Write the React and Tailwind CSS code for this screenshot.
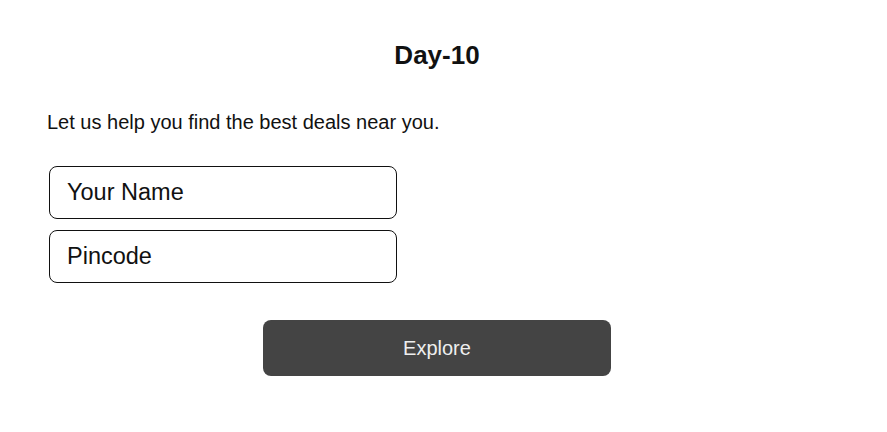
export default function App() {
  const ff = { fontFamily: '"Liberation Sans", Arial, sans-serif' };
  return (
    <div className="w-[887px] h-[432px] bg-white text-[#111]" style={ff}>
      <div className="w-[874px]">
        <h1 className="pt-[41px] text-center text-[26px] leading-[28px] font-bold">Day-10</h1>
        <p className="mt-[41px] ml-[47px] text-[20px] leading-[24px]">Let us help you find the best deals near you.</p>
        <div className="mt-[32px] ml-[49px] flex flex-col gap-[11px]">
          <input
            className="w-[348px] h-[53px] border-[1.5px] border-[#111] rounded-[8px] pl-[17px] text-[23.5px] placeholder:text-[#111] outline-none"
            placeholder="Your Name"
            style={ff}
          />
          <input
            className="w-[348px] h-[53px] border-[1.5px] border-[#111] rounded-[8px] pl-[17px] text-[23.5px] placeholder:text-[#111] outline-none"
            placeholder="Pincode"
            style={ff}
          />
        </div>
        <div className="mt-[37px] flex justify-center">
          <button className="w-[348px] h-[56px] bg-[#444444] rounded-[8px] text-[#eeeeee] text-[20px]" style={ff}>
            Explore
          </button>
        </div>
      </div>
    </div>
  );
}
